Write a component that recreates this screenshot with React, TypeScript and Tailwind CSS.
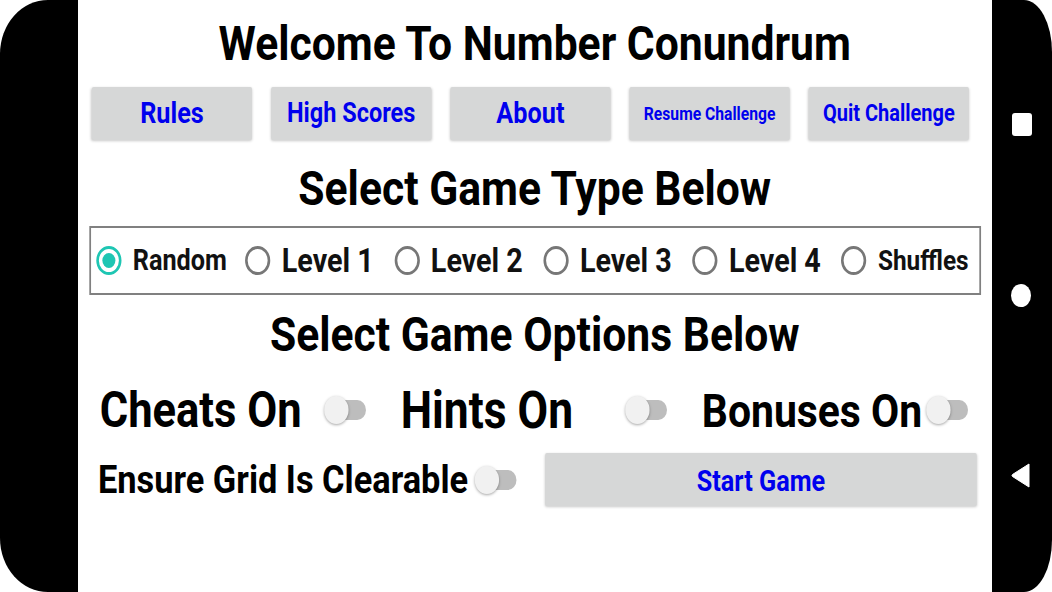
import React from "react";

const levels: { label: string; size: string }[] = [
  { label: "Random", size: "text-[29px]" },
  { label: "Level 1", size: "text-[33px]" },
  { label: "Level 2", size: "text-[33px]" },
  { label: "Level 3", size: "text-[33px]" },
  { label: "Level 4", size: "text-[33px]" },
  { label: "Shuffles", size: "text-[28px]" },
];

function Radio({ label, size, checked }: { label: string; size: string; checked?: boolean }) {
  return (
    <div className="flex w-[171.3px] shrink-0 items-center pl-[6px]">
      {checked ? (
        <span className="flex h-[29px] w-[29px] shrink-0 items-center justify-center rounded-full border-[3px] border-[#1ec6b3]">
          <span className="h-[15px] w-[15px] rounded-full bg-[#1ec6b3]" />
        </span>
      ) : (
        <span className="h-[29px] w-[29px] shrink-0 rounded-full border-[3px] border-[#777777]" />
      )}
      <span className={"ml-[13px] whitespace-nowrap font-bold leading-none text-[#111] " + size}>
        {label}
      </span>
    </div>
  );
}

function Toggle() {
  return (
    <span className="relative block h-[30px] w-[48px] shrink-0">
      <span className="absolute left-[6px] right-0 top-[5px] h-[20px] rounded-full bg-[#bdbdbd]" />
      <span className="absolute left-0 top-[1px] h-[28px] w-[28px] rounded-full bg-[#f1f1f1] shadow-[0_1px_3px_rgba(0,0,0,0.35)]" />
    </span>
  );
}

function Btn({ label, size }: { label: string; size: string }) {
  return (
    <div
      className={
        "flex h-[53px] w-[184px] items-center justify-center rounded-[2px] bg-[#d6d7d7] font-bold leading-none text-[#0000ee] shadow-[0_1px_3px_rgba(0,0,0,0.22)] " +
        size
      }
    >
      <span className="whitespace-nowrap">{label}</span>
    </div>
  );
}

const options: { label: string; size: string }[] = [
  { label: "Cheats On", size: "text-[50px]" },
  { label: "Hints On", size: "text-[51px]" },
  { label: "Bonuses On", size: "text-[47px]" },
];

export default function App() {
  return (
    <div className="flex h-[592px] w-[1052px] overflow-hidden bg-white font-['Roboto',sans-serif]">
      <div className="h-full w-[78px] shrink-0 rounded-l-[48px_54px] bg-black" />
      <div className="h-full w-[914px] shrink-0 overflow-hidden bg-white">
        <div className="flex w-[1050px] origin-left scale-x-[0.87] flex-col text-black">
          <h1 className="pt-[19px] text-center text-[49px] font-bold leading-none">
            Welcome To Number Conundrum
          </h1>
          <div className="mt-[19px] flex gap-[22px] pl-[16px]">
            <Btn label="Rules" size="text-[29px]" />
            <Btn label="High Scores" size="text-[27px]" />
            <Btn label="About" size="text-[29px]" />
            <Btn label="Resume Challenge" size="text-[18px]" />
            <Btn label="Quit Challenge" size="text-[23px]" />
          </div>
          <h2 className="mt-[24px] text-center text-[49px] font-bold leading-none">
            Select Game Type Below
          </h2>
          <div className="ml-[13px] mt-[13px] flex h-[69px] w-[1025px] items-center overflow-hidden border-2 border-[#808080]">
            {levels.map((l, i) => (
              <Radio key={l.label} label={l.label} size={l.size} checked={i === 0} />
            ))}
          </div>
          <h2 className="mt-[15px] text-center text-[49px] font-bold leading-none">
            Select Game Options Below
          </h2>
          <div className="mt-[26px] flex h-[50px] gap-[40px] pl-[25px]">
            {options.map((o) => (
              <div key={o.label} className="flex w-[306px] items-center justify-between">
                <span className={"whitespace-nowrap font-bold leading-none " + o.size}>{o.label}</span>
                <Toggle />
              </div>
            ))}
          </div>
          <div className="mt-[18px] flex h-[53px] items-center pl-[23px] pr-[17px]">
            <span className="whitespace-nowrap text-[39.5px] font-bold leading-none">
              Ensure Grid Is Clearable
            </span>
            <span className="ml-[8px]">
              <Toggle />
            </span>
            <div className="ml-auto flex h-[53px] w-[496px] items-center justify-center rounded-[2px] bg-[#d6d7d7] pt-[3px] text-[29px] font-bold leading-none text-[#0000ee] shadow-[0_1px_3px_rgba(0,0,0,0.22)]">
              Start Game
            </div>
          </div>
        </div>
      </div>
      <div className="flex h-full w-[60px] shrink-0 flex-col items-center rounded-r-[28px_52px] bg-black pt-[113px]">
        <span className="ml-[-1px] h-[23px] w-[20px] rounded-[3px] bg-white" />
        <span className="ml-[-2px] mt-[148px] h-[23px] w-[20px] rounded-[50%] bg-white" />
        <svg className="ml-[-4px] mt-[156px]" width="19" height="25" viewBox="0 0 19 25">
          <path d="M18 1 L18 24 L1.5 13.5 Q0.5 12.5 1.5 11.5 Z" fill="white" stroke="white" strokeLinejoin="round" strokeWidth="1" />
        </svg>
      </div>
    </div>
  );
}
